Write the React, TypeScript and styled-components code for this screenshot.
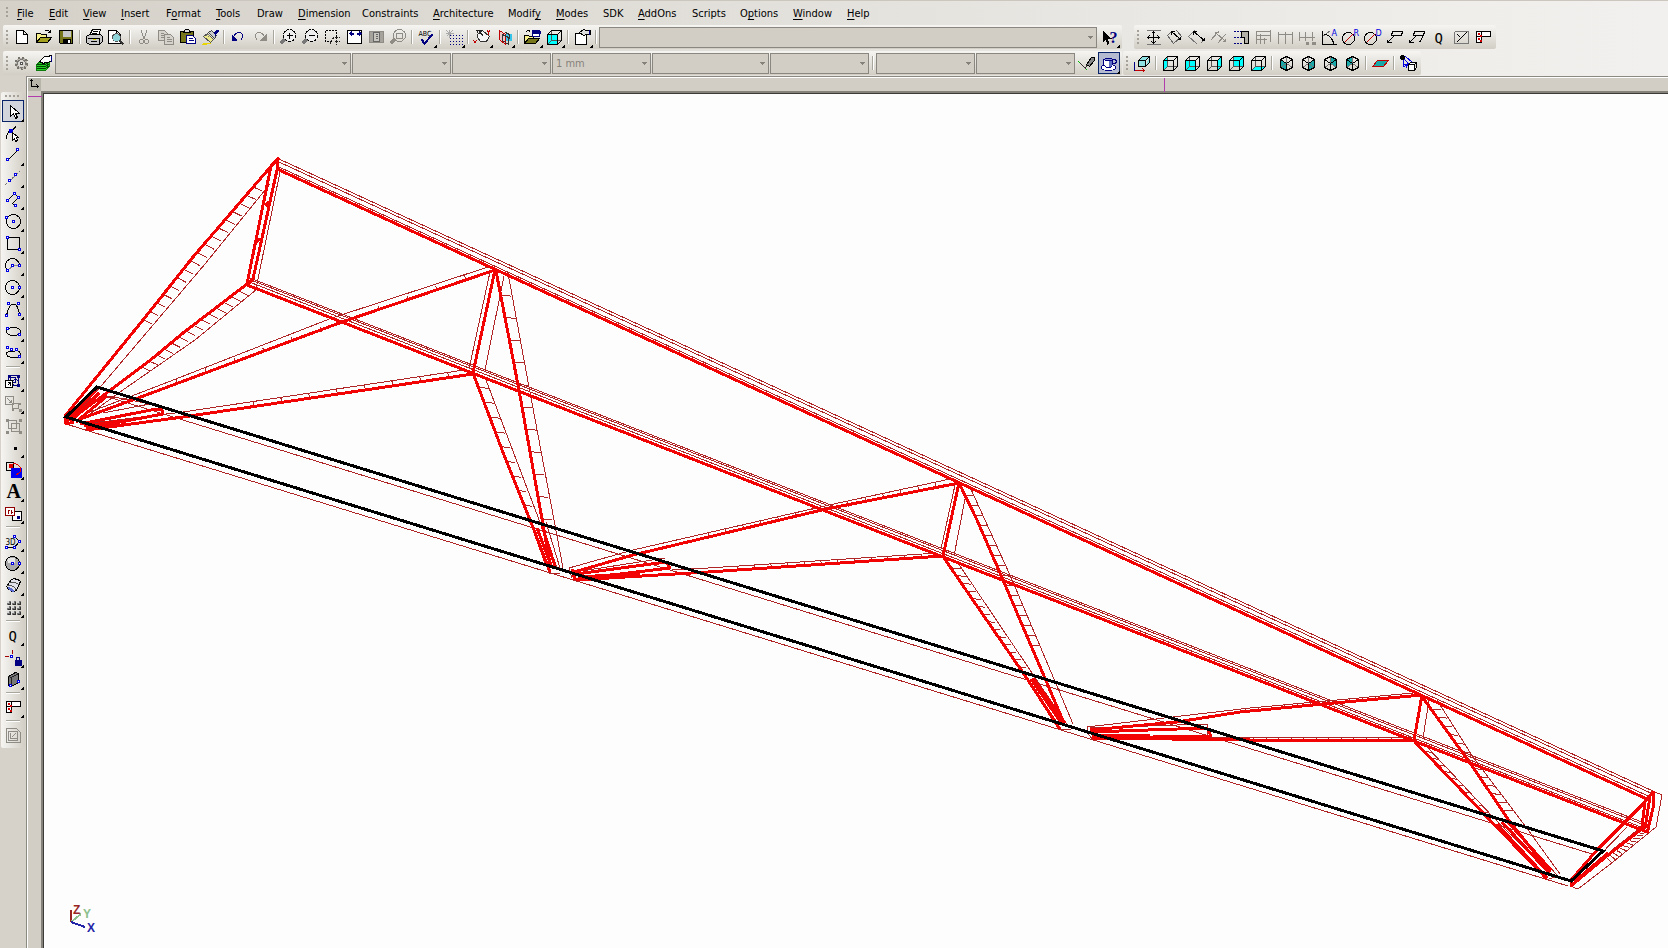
import React from "react";
import styled, { createGlobalStyle, css } from "styled-components";

const GlobalStyle = createGlobalStyle`
  html, body { margin: 0; padding: 0; }
  body {
    background: #d4d0c8;
    font-family: "DejaVu Sans Condensed", "Liberation Sans", sans-serif;
    font-size: 11px;
    color: #000;
  }
  * { box-sizing: border-box; }
`;

/* ---------- layout ---------- */

const AppFrame = styled.div`
  display: flex;
  flex-direction: column;
  height: 100vh;
  overflow: hidden;
`;

const Header = styled.header`
  flex: none;
  background: linear-gradient(90deg, #d5d1c9 0%, #efeeeb 88%, #f1f0ee 100%);
`;

const MenuBar = styled.nav`
  display: flex;
  align-items: center;
  height: 25px;
  padding-left: 6px;
  border-top: 1px solid #cbc7bf;
`;

const MenuItem = styled.button<{ $width: number }>`
  flex: none;
  width: ${(p) => p.$width}px;
  height: 24px;
  padding: 2px 0 0;
  border: 0;
  background: transparent;
  font: inherit;
  line-height: 22px;
  text-align: left;
  white-space: nowrap;
  color: #000;
`;

const Key = styled.u`
  text-underline-offset: 2px;
`;

const ToolRow = styled.div<{ $gap: number }>`
  display: flex;
  gap: ${(p) => p.$gap}px;
  padding: 0 0 2px 3px;
  &:last-child { padding-bottom: 1px; }
`;

const Toolbar = styled.div<{ $vertical?: boolean }>`
  display: flex;
  align-items: center;
  border-radius: 2px;
  ${(p) =>
    p.$vertical
      ? css`
          flex-direction: column;
          width: 24px;
          padding-bottom: 2px;
          background: linear-gradient(90deg, #f6f5f2, #d2cec5);
        `
      : css`
          flex: none;
          height: 24px;
          padding-right: 2px;
          background: linear-gradient(180deg, #f6f5f2, #d2cec5);
        `}
`;

const Grip = styled.span<{ $vertical?: boolean }>`
  flex: none;
  ${(p) =>
    p.$vertical
      ? css`
          width: 16px;
          height: 8px;
          background: repeating-linear-gradient(90deg, #a5a198 0 2px, transparent 2px 4px) 0 3px / 16px 2px no-repeat;
        `
      : css`
          width: 8px;
          height: 14px;
          background: repeating-linear-gradient(180deg, #a5a198 0 2px, transparent 2px 4px) 3px 0 / 2px 14px no-repeat;
        `}
`;

const MenuGrip = styled(Grip)`
  width: 11px;
  height: 12px;
  background-position: 0 0;
`;

const Divider = styled.span<{ $vertical?: boolean }>`
  flex: none;
  border: 0 solid #a9a69e;
  ${(p) =>
    p.$vertical
      ? css`
          width: 14px;
          height: 2px;
          margin: 2px 0;
          border-top-width: 1px;
          border-bottom: 1px solid #fff;
        `
      : css`
          width: 2px;
          height: 14px;
          margin: 0 2px;
          border-left-width: 1px;
          border-right: 1px solid #fff;
        `}
`;

const ToolButton = styled.button<{ $active?: boolean }>`
  flex: none;
  display: block;
  width: 22px;
  height: 22px;
  padding: 0;
  border: 0;
  background: ${(p) => (p.$active ? "#b4bbd0" : "transparent")};
  box-shadow: ${(p) => (p.$active ? "inset 0 0 0 1px #0a246a" : "none")};
  svg { display: block; }
`;

const PickedButton = styled(ToolButton)`
  background: #d3d5dc;
`;

const ComboWrap = styled.span<{ $width: number }>`
  position: relative;
  flex: none;
  width: ${(p) => p.$width}px;
  height: 21px;
  margin-right: 1px;
  svg { position: absolute; right: 4px; top: 9px; pointer-events: none; }
`;

const ComboSelect = styled.select`
  appearance: none;
  display: block;
  width: 100%;
  height: 100%;
  padding: 0 3px;
  border: 1px solid #8a8780;
  border-radius: 0;
  background: #d3cec5;
  font: inherit;
  color: #85827b;
  opacity: 1;
`;

const Workspace = styled.main`
  flex: 1;
  display: flex;
  min-height: 0;
  background: #d3cec5;
`;

const Side = styled.aside`
  flex: none;
  width: 26px;
  padding: 16px 0 0 1px;
  background: #d6d2ca;
`;

const Sheet = styled.section`
  flex: 1;
  display: flex;
  flex-direction: column;
  min-width: 0;
  border-top: 1px solid #8c8982;
  border-left: 1px solid #8c8982;
`;

const TopRuler = styled.div`
  flex: none;
  position: relative;
  display: flex;
  height: 14px;
  border-top: 1px solid #fff;
  border-left: 1px solid #fff;
`;

const Corner = styled.span`
  width: 13px;
  height: 13px;
  background: #b7b4aa;
  svg { display: block; }
`;

const SheetBody = styled.div`
  flex: 1;
  display: flex;
  min-height: 0;
`;

const SideRuler = styled.div`
  flex: none;
  position: relative;
  width: 14px;
  border-left: 1px solid #fff;
`;

const TopMark = styled.i`
  position: absolute;
  left: 1136px;
  top: 0;
  width: 1px;
  height: 14px;
  background: #b03cae;
`;

const SideMark = styled.i`
  position: absolute;
  left: 0;
  top: 5px;
  width: 14px;
  height: 1px;
  background: #b03cae;
`;

const Canvas = styled.div`
  flex: 1;
  min-width: 0;
  border-style: solid;
  border-color: #85827b;
  border-width: 2px 0 0 2px;
  background: #fdfdfd;
  box-shadow: inset 1px 1px 0 #3c3b38;
  padding: 1px 0 0 1px;
  overflow: hidden;
  svg { display: block; width: 100%; height: 100%; }
`;

/* ---------- icons ---------- */

const K = "#000";
const B = "#0000e0";
const N = "#000080";
const G = "#8f8c86";
const R = "#c00000";
const C = "#00ffff";
const W = "#fff";
const T = "#1aa7a7";

const L = (d: string, stroke = K, fill = "none", w = 1) => (
  <path key={d + stroke + fill} d={d} stroke={stroke} fill={fill} strokeWidth={w} />
);
const F = (d: string, fill = K) => <path key={d + fill} d={d} fill={fill} />;
const nodes = (...pts: number[][]) => L(pts.map(([x, y]) => `M${x - 1} ${y - 1}h2v2h-2z`).join(""), B, W);
const Tx = (s: string, x: number, y: number, size: number, fill = K, serif = false) => (
  <text
    x={x}
    y={y}
    fontSize={size}
    fill={fill}
    fontWeight={serif ? "bold" : "normal"}
    fontFamily={serif ? '"Liberation Serif", serif' : '"DejaVu Sans Condensed", sans-serif'}
  >
    {s}
  </text>
);
const ring = (x: number, y: number, r: number, stroke = K, fill = "none") => (
  <circle cx={x} cy={y} r={r} stroke={stroke} fill={fill} />
);
const cube = (face: string) => (
  <>
    {F(face, C)}
    {L("M8 4v10h10M4 18l4-4", "#555")}
    {L("M4 8h10v10h-10zM4 8l4-4h10l-4 4M18 4v10l-4 4")}
  </>
);
const iso = (face: string) => (
  <>
    {F(face, T)}
    {L("M11 4v7M5 15l6-4l6 4", "#777")}
    {L("M11 4l6 3v8l-6 3l-6-3v-8zM5 7l6 4l6-4M11 11v7")}
  </>
);
const lens = (extra: React.ReactNode) => (
  <>
    <circle cx={12} cy={9} r={6} stroke={K} fill="#eee" strokeDasharray="3 1" />
    {L("M3 17l4-4", "#777", "none", 3)}
    {extra}
  </>
);

const icons: Record<string, React.ReactNode> = {
  new: <>{L("M5 4h7l4 4v9h-11zM12 4v4h4", K, W)}</>,
  open: (
    <>
      {L("M3 16v-9h4l1 1h5v3", K, "#f7f08a")}
      {L("M3 16l4-5h11l-4 5z", K, "#a3a020")}
      {L("M11 5q3-3 6 1M17 3v3h-3")}
    </>
  ),
  save: <>{L("M4 4h13v13h-12l-1-1z", K, "#77761a")}{F("M7 4h8v6h-8z", "#c8c8c8")}{F("M7 12h8v5h-8z")}{F("M12 13h2v3h-2z", W)}</>,
  print: (
    <>
      {L("M6 9l3-6h8l-2 6", K, W)}
      {L("M3 10l3-2h11l2 2v5l-3 3h-10l-3-2z", K, "#c8c8c8")}
      {L("M9 5h5M8 7h5M4 12h12M7 15h6M16 12v5")}
      {F("M9 12h3v1h-3z", "#d8d800")}
    </>
  ),
  preview: <>{L("M3 4h8l4 4v9h-12zM11 4v4h4", K, W)}{ring(11, 11, 4, "#555", "#8fd4d8")}{L("M14 14l4 4", "#333", "none", 2)}</>,
  cut: <>{L("M8 4l1 5l3 4M13 4l-1 5l-3 4", G)}{ring(8, 15, 2, G)}{ring(13, 15, 2, G)}</>,
  copy: <>{L("M3 4h6l3 3v7h-9zM5 7h3M5 9h5M5 11h5", G, "#d6d3cc")}{L("M9 8h6l3 3v7h-9zM11 11h3M11 13h5M11 15h5", G, "#d6d3cc")}</>,
  paste: <>{L("M3 5h13v11h-13z", K, "#77761a")}{L("M6 6l2-3h3l2 3z", K, "#ddd")}{L("M9 9h6l3 3v5h-9z", N, W)}{L("M11 12h4M11 14h5", N)}</>,
  brush: (
    <>
      {L("M3 17h7l2-1M2 18h5", "#e8d400")}
      {L("M8 7l6 6l-3 3l-7-6z", "#555", "#ece88a")}
      {L("M8 11l3-3M7 9l3-2", "#777")}
      {L("M9 6l6 6l2-3l-5-5z", "#444", "#ccc")}
      {F("M14 6l3-3h2v2l-3 4z", N)}
    </>
  ),
  undo: <>{L("M6 10q2-4 6-4q4 1 3 5l-2 3", N)}{F("M4 7v7h6z", N)}</>,
  redo: <>{L("M15 10q-2-4-6-4q-4 1-3 5l2 3", G)}{F("M17 7v7h-6z", G)}</>,
  zoomIn: lens(L("M9 9h6M12 6v6")),
  zoomOut: lens(L("M9 9h6")),
  zoomWin: (
    <>
      <path d="M4 4h11v8M4 4v11h6" stroke={K} fill="none" strokeDasharray="2 1" />
      <path d="M9 17q0-6 6-6h3M13 15h5M15 13v5" stroke="#222" strokeDasharray="3 1" />
    </>
  ),
  fit: <>{L("M4 4h14v13h-14z", K, W)}{F("M5 7l3-3v2h2v2h-2v2zM18 7l-3-3v2h-2v2h2v2z", N)}</>,
  page: <>{L("M4 5h14v11h-14z", G, "#a6a39c")}{L("M8 6h6v9h-6zM10 8h2M10 10h2M10 12h2", "#666", "#c8c5be")}</>,
  zoomObj: <>{ring(12, 9, 6, G)}{L("M9 7h6v5h-6z", G)}{L("M3 17l4-4", G, "none", 3)}</>,
  spell: <>{Tx("ABC", 3, 9, 7)}{L("M6 13l3 4l8-9", N, "none", 2)}</>,
  snap: (
    <>
      <path d="M6 9h13M6 12h13M6 15h13M6 18h13" stroke={N} strokeDasharray="1 2" />
      {L("M6 3v8M2 7h8M3 4l6 6M9 4l-6 6", "#aaa")}
    </>
  ),
  rotate: <>{L("M6 8l5-4l7 6l-3 5h-6l-3-4z", "#333", "#f6f6f6")}{L("M5 4l2 3M5 4h6M8 5l4 5", "#222")}{L("M16 4l1 2l1-2M17 6v2M2 14l3 3M5 14l-3 3", R)}</>,
  mirror: <>{F("M12 8l6-1v7h-6z", "#38c4e8")}{L("M6 4l6 4v10l-6-5z", R, "#eec6c6")}{L("M9 8l6 3v7l-6-4zM12 6l4 2v4", "#333")}</>,
  openWin: <>{L("M3 17v-8h4l1 1h4v3", K, "#f7f08a")}{L("M3 17l4-5h11l-4 5z", K, "#77761a")}{L("M11 4h7v6h-7z", N, W)}{F("M11 4h8v3h-8z", N)}{L("M4 6q2-3 5-1")}</>,
  solid: cube("M4 8h10v10h-10z"),
  props: <>{L("M4 7h11v11h-11z", K, W)}{L("M8 6l4-3l3 1h4v4h-4l-3 1z", K, "#ddd")}{L("M18 3v5", N)}</>,
  help: <>{F("M4 4v12l3-3l2 5l2-1l-2-5h4z")}{Tx("?", 11, 16, 16, N, true)}</>,
  gear: (
    <>
      <circle cx={10} cy={11} r={6} stroke="#77736a" fill="#b9b6ae" strokeWidth={2} strokeDasharray="2 2" />
      {ring(10, 11, 4, "#777", "#d9d7d0")}
      {ring(10, 11, 1, "#555", W)}
    </>
  ),
  layers: (
    <>
      {L("M3 12l4-3h9v5l-4 4h-9z", "#0c7a0c", "#21d521")}
      {L("M3 12h9l4-3M3 14h9l4-3M3 16h9l4-3", "#064006")}
      {L("M6 9l5-5h3l4-1v5l-3 2h-3l-2 1z", K, W)}
      {L("M18 3v6", N)}
    </>
  ),
  pen: <>{L("M2 9l9 9", "#00c000")}{L("M4 11l5 5l1-3", "#333")}{L("M10 12l5-7h3v3l-5 6z", K, "#888")}</>,
  cup: (
    <>
      <ellipse cx={10} cy={15} rx={7} ry={3} stroke={N} fill={W} />
      <ellipse cx={15} cy={9} rx={3} ry={2} stroke={N} />
      {L("M5 7v5l3 3h4l2-3v-5z", N, W)}
      {F("M10 8h4l-1 6h-3z", "#5c6cc0")}
      <ellipse cx={10} cy={7} rx={4} ry={1} stroke={N} fill="#8d98d4" />
    </>
  ),
  d1: <>{L("M4 4h14M4 18h14", "#777")}{L("M11 5v12M5 11h12M9 7l2-2l2 2M9 15l2 2l2-2M7 9l-2 2l2 2M15 9l2 2l-2 2")}</>,
  d2: <>{L("M3 9l6 8M12 4l6 7M3 9l4-4M9 17l8-7", "#666")}{L("M7 5l9 8M7 8v-3h3M16 10v3h-3")}</>,
  d3: <>{L("M2 10l6-6M2 10l9 8M18 13l-4 4", "#777")}{L("M7 5l11 9M7 8v-3h3M18 11v3h-3")}</>,
  d4: <>{L("M2 14l8-9M9 17l8-9M7 6l10 9M7 9v-3h3M17 12v3h-3", G)}</>,
  d5: <><path d="M3 5h8M3 11h8M3 17h8" stroke={N} strokeDasharray="2 1" />{L("M11 5h7v12h-4v-6h-3z", K, "#b5b2aa")}</>,
  d6: <>{L("M4 4v13M4 5h14M4 9h14M4 13h10M8 7v10M12 11v6M18 3v12", G)}</>,
  d7: <>{L("M4 5v12M11 5v12M18 5v12M4 8h14", G)}</>,
  d8: <>{L("M3 5v9M9 5v9M16 5v9M3 11h15", G)}{F("M9 15h3v3h-3zM15 15h4v3h-4z", G)}</>,
  d9: <>{L("M4 10L12 4", "#777")}{L("M4 4v14h14M5 8q8 0 10 9M5 8h3M15 17v-3")}{Tx("A", 13, 9, 9, B)}</>,
  d10: <>{ring(8, 12, 6)}{L("M4 16l8-8", R)}{Tx("R", 13, 9, 9, B)}</>,
  d11: <>{ring(8, 12, 6)}{L("M4 16l8-8", R)}{Tx("D", 13, 9, 9, B)}</>,
  d12: <>{L("M8 5h10l-1 4h-10zM10 9l-7 7M3 13v3h4")}</>,
  d13: <>{L("M8 5h10l-1 4h-10zM10 9l-7 7M3 13v3h4M17 9l-4 7")}</>,
  label: (
    <text x={6} y={16} fontSize={14} fontFamily='"DejaVu Sans Mono", monospace' fill={K}>
      Q
    </text>
  ),
  d15: <>{L("M4 5h14M4 5v12h14v-12", "#777")}{L("M6 16l10-10M7 8l3 3")}</>,
  plan: <>{L("M4 5h14v5h-14zM9 5v11h-5v-11M4 10h5", K, W)}{F("M5 6h2v2h-2zM7 8h2v2h-2zM5 11h2v2h-2zM7 13h2v2h-2z", "#d00000")}</>,
  ucs: <>{L("M7 8h7v6h-7zM7 8l4-4h7l-4 4M18 4v6l-4 4", K, "#8fe0e0")}{L("M3 9v9", N)}{L("M3 18h10M11 16l2 2l-2 2", R)}</>,
  c1: cube("M4 8l4-4v10l-4 4z"),
  c3: cube("M14 8l4-4v10l-4 4z"),
  c4: cube("M8 4h10v10h-10z"),
  c5: cube("M4 18l4-4h10l-4 4z"),
  i1: iso("M5 7l6 4v7l-6-3z"),
  i2: iso("M11 11l6-4v8l-6 3z"),
  i3: iso("M11 4l6 3v8l-6-4z"),
  i4: iso("M11 4l-6 3v8l6-4z"),
  plane: <>{L("M3 14l5-6h11l-5 6z", R, T)}</>,
  cam: (
    <>
      {L("M6 6l8 8M6 6v8M6 14l7-2M8 4l7 6M5 12h5M9 16l1-6", B)}
      {ring(5, 5, 2, K, K)}
      {L("M11 12h6v6h-6zM11 12l2-2h6l-2 2M19 10v5l-2 3", K, W)}
    </>
  ),

  arrow: <>{L("M8 5v11l3-3l2 5l2-1l-2-4h4z", K, W)}</>,
  nodeEdit: <>{L("M4 16q0-6 4-8q4-1 5-4")}{F("M6 6h4v4h-4z", B)}{L("M10 10v8l2-2l1 3l2-1l-1-3h2z", K, W)}</>,
  line: <>{L("M6 15l10-10")}{nodes([5, 15], [15, 5])}</>,
  ray: <><path d="M3 18l15-14" stroke="#777" strokeDasharray="2 1" />{nodes([7, 14], [13, 8])}</>,
  poly: <>{L("M5 12l7-7l4 4l-6 6l3 2")}{nodes([5, 12], [12, 5], [16, 9], [13, 17])}</>,
  circle2: <>{ring(11, 11, 7)}{nodes([11, 11], [4, 7])}</>,
  rect: <>{L("M5 5h12v12h-12z")}{nodes([5, 5], [17, 17])}</>,
  arc: <>{L("M5 16a7 7 0 1 1 12-5")}{L("M5 16l6-5h6", "#888")}{nodes([5, 16], [10, 11], [17, 11])}</>,
  circle: <>{ring(10, 11, 7)}{nodes([10, 11], [17, 11])}</>,
  bezier: <>{L("M4 17C7 2 15 2 17 16")}{nodes([6, 5], [16, 5], [4, 17], [17, 16])}</>,
  ellipse: <><ellipse cx={11} cy={11} rx={7} ry={4} stroke={K} fill="none" />{nodes([5, 8], [17, 14])}</>,
  curve: <>{L("M4 10q-1 5 7 5q7 0 7-3q0-5-8-3q-6 0-6 2")}{nodes([5, 5], [9, 7], [14, 7], [17, 14])}</>,
  sym: <>{L("M6 5h10v10h-10zM8 7h5v5h-5z", N)}{F("M5 4h3v3h-3zM14 4h3v3h-3zM14 13h3v3h-3z", N)}{ring(13, 12, 3, N)}{L("M3 10h7v7h-7zM5 15l3-3M5 12h3v3", K, W)}</>,
  explode: <>{L("M3 4h8v8h-8zM5 6l4 4M9 7v3h-3M10 11h6v5h-6z", G)}{F("M9 10h2v2h-2zM16 10h2v2h-2zM9 16h2v2h-2zM16 16h3v3h-3z", G)}</>,
  group: <>{L("M6 6h8v8h-8zM9 9h8v8h-8z", G)}{F("M3 4h3v3h-3zM16 4h3v3h-3zM3 16h3v3h-3zM16 16h3v3h-3z", G)}</>,
  point: <>{F("M11 10h3v3h-3z")}</>,
  fill: <>{L("M4 4h7v8h-7z")}{F("M6 5h4v4h-4z", "#e00000")}{F("M8 9h11v10h-11z", "#0000f0")}{L("M10 5q7 0 8 5q1 4-4 6", "#e00000")}</>,
  text: <>{Tx("A", 4, 17, 20, K, true)}</>,
  block: <>{L("M10 9h9v9h-9z", K, W)}{L("M3 5h9v8h-9z", "#900000", W)}{L("M6 7v4M9 7v4M5 8h2M8 10h2", "#900000")}{F("M14 13h3v3h-3z", N)}</>,
  three: <>{L("M13 7l4 4l-5 6h-7")}{Tx("3D", 3, 14, 8)}{nodes([12, 6], [17, 11], [12, 17], [4, 17])}</>,
  sphere: <>{ring(10, 11, 7, K, "#a8a8a8")}<ellipse cx={9} cy={8} rx={4} ry={3} fill="#e6e6e6" />{nodes([10, 11], [17, 11])}</>,
  cyl: <>{L("M4 12l5-7q5-2 9 2l-4 9q-5 3-10-4z", K, "#e2e2ea")}{L("M4 12q1-2 5-1q4 2 5 5M7 8q4-1 10 2", "#555")}{F("M5 13q5-1 7 4q-5 1-7-4z", "#5c6cd0")}</>,
  balls: (
    <>
      {[6, 11, 16].flatMap((y) =>
        [6, 11, 16].map((x) => (
          <g key={`${x}-${y}`}>
            {F(`M${x - 2} ${y - 2}h4v4h-4z`, "#777")}
            {F(`M${x - 2} ${y - 2}h2v2h-2z`, "#d8d8d8")}
            {L(`M${x - 1} ${y + 2}h3v-3`, "#333")}
          </g>
        ))
      )}
    </>
  ),
  lock: <>{L("M2 10h4M10 3v4", "#a00000")}{nodes([9, 10])}{F("M12 13h7v6h-7z", N)}{L("M14 13v-2h3v2", N)}</>,
  slab: <>{L("M6 8l7-4l3 1v9l-7 4l-3-1z", K, "#777")}{L("M6 8l3 1v9M9 9l7-4", "#222")}{nodes([8, 17], [16, 13])}</>,
  sheet: <>{L("M4 4h10l4 4v10h-14zM6 7h9v9h-9zM8 8v6h6M9 13l4-4", G)}</>,
};

const Icon = ({ name, drop }: { name: string; drop?: boolean }) => (
  <svg width="22" height="22" viewBox="0 0 22 22" shapeRendering="crispEdges" aria-hidden="true">
    <g transform="translate(.5 .5)" fill="none">
      {icons[name]}
    </g>
    {drop && <path d="M22 18v4h-4z" fill="#000" />}
  </svg>
);

/* ---------- controls ---------- */

const Tools = ({ list, vertical }: { list: string; vertical?: boolean }) => (
  <>
    {list.split(" ").map((id, i) => {
      if (id === "|") return <Divider key={i} $vertical={vertical} />;
      const drop = id.endsWith("+");
      const name = drop ? id.slice(0, -1) : id;
      return (
        <ToolButton key={i} type="button" aria-label={name} $active={name === "cup"}>
          <Icon name={name} drop={drop} />
        </ToolButton>
      );
    })}
  </>
);

const Combo = ({ label, width, value = "" }: { label: string; width: number; value?: string }) => (
  <ComboWrap $width={width}>
    <ComboSelect aria-label={label} disabled defaultValue={value}>
      <option value={value}>{value}</option>
    </ComboSelect>
    <svg width="5" height="3" viewBox="0 0 5 3" shapeRendering="crispEdges" aria-hidden="true">
      <path d="M0 0h5L3 3H2z" fill="#85827b" />
    </svg>
  </ComboWrap>
);

const menus: [string, string, string, number][] = [
  ["", "F", "ile", 32],
  ["", "E", "dit", 34],
  ["", "V", "iew", 38],
  ["", "I", "nsert", 45],
  ["F", "o", "rmat", 50],
  ["", "T", "ools", 41],
  ["Draw", "", "", 41],
  ["", "D", "imension", 64],
  ["Constraints", "", "", 71],
  ["", "A", "rchitecture", 75],
  ["Modif", "y", "", 48],
  ["", "M", "odes", 47],
  ["SDK", "", "", 35],
  ["", "A", "ddOns", 54],
  ["Scripts", "", "", 48],
  ["O", "p", "tions", 53],
  ["", "W", "indow", 54],
  ["", "H", "elp", 40],
];

/* ---------- model drawing ---------- */

type Pt = [number, number];

const poly = (pts: Pt[]) => pts.map(([x, y], i) => `${i ? "L" : "M"}${x} ${y}`).join("");

const at = (pts: Pt[], t: number): Pt => {
  const spans = pts.slice(1).map((p, i) => Math.hypot(p[0] - pts[i][0], p[1] - pts[i][1]));
  let d = t * spans.reduce((a, b) => a + b, 0);
  for (let i = 0; i < spans.length; i++) {
    if (d <= spans[i] || i === spans.length - 1) {
      const k = d / spans[i];
      return [pts[i][0] + (pts[i + 1][0] - pts[i][0]) * k, pts[i][1] + (pts[i + 1][1] - pts[i][1]) * k];
    }
    d -= spans[i];
  }
  return pts[0];
};

const rungs = (a: Pt[], b: Pt[], n: number) =>
  Array.from({ length: n }, (_, i) => poly([at(a, (i + 0.5) / n), at(b, (i + 0.5) / n)])).join("");

const thick: Pt[][] = [
  [[277, 169], [1649, 800]],
  [[247, 285], [1647, 832]],
  [[279, 158], [271, 166], [247, 284]],
  [[278, 158], [277, 170], [253, 279], [247, 285]],
  [[269, 202], [265, 206]],
  [[260, 239], [255, 243]],
  [[279, 158], [273, 164], [193, 257], [147, 315], [65, 416]],
  [[247, 284], [183, 333], [153, 358], [112, 389], [70, 420]],
  [[495, 270], [342, 322], [138, 398], [80, 419]],
  [[473, 374], [183, 417], [87, 430]],
  [[495, 270], [473, 373]],
  [[496, 271], [519, 390], [550, 564]],
  [[473, 373], [504, 455], [534, 530], [547, 566]],
  [[959, 483], [826, 509], [633, 555], [574, 572]],
  [[943, 556], [708, 572], [576, 580]],
  [[959, 483], [943, 556]],
  [[960, 485], [977, 520], [1000, 573], [1064, 723]],
  [[944, 558], [988, 622], [1028, 680], [1059, 728]],
  [[1422, 695], [1323, 704], [1240, 712], [1177, 722], [1090, 730]],
  [[1414, 740], [1250, 740], [1092, 738]],
  [[1422, 695], [1414, 740]],
  [[1423, 698], [1470, 763], [1510, 822], [1550, 872]],
  [[1415, 742], [1487, 817], [1547, 879]],
  // fan foot, left support
  [[65, 417], [66, 424], [74, 422]],
  [[95, 391], [66, 422]],
  [[99, 393], [70, 422]],
  [[107, 396], [76, 422]],
  [[80, 424], [156, 409], [162, 410], [163, 414], [88, 428]],
  [[84, 426], [120, 421]],
  [[86, 429], [130, 424]],
  // first valley
  [[534, 530], [550, 572]],
  [[537, 528], [552, 568]],
  [[542, 526], [555, 566]],
  [[576, 574], [666, 562], [670, 568], [578, 579]],
  [[572, 569], [575, 580]],
  [[580, 577], [640, 573]],
  // second valley
  [[1028, 680], [1060, 729]],
  [[1033, 678], [1065, 723]],
  [[1031, 679], [1062, 724]],
  [[1090, 732], [1207, 728], [1211, 736], [1096, 738]],
  [[1092, 735], [1150, 735]],
  // third valley
  [[1497, 824], [1547, 878]],
  [[1502, 822], [1549, 873]],
  [[1508, 822], [1551, 870]],
  // right end frame
  [[1653, 791], [1654, 804], [1647, 833]],
  [[1645, 802], [1642, 826], [1640, 830]],
  [[1650, 797], [1645, 828]],
  [[1653, 792], [1644, 803], [1597, 850], [1571, 880]],
  [[1647, 825], [1608, 855], [1571, 886], [1571, 881]],
  [[1608, 853], [1574, 882]],
];

const A1: Pt[] = [[257, 183], [193, 257], [140, 324]];
const A2: Pt[] = [[266, 187], [203, 262], [148, 328]];
const B1: Pt[] = [[243, 288], [183, 333], [138, 370]];
const B2: Pt[] = [[252, 293], [192, 338], [147, 374]];

const thin: Pt[][] = [
  [[279, 159], [1655, 792], [1662, 795], [1656, 827], [1613, 862], [1578, 889], [1570, 886]],
  [[279, 162], [1655, 795]],
  [[279, 167], [1648, 796]],
  [[250, 278], [1647, 824]],
  [[251, 280], [1647, 826]],
  [[252, 283], [1646, 829]],
  [[280, 172], [258, 279], [256, 289]],
  [[66, 424], [1568, 886]],
  [[105, 396], [1592, 854]],
  [[270, 184], [205, 264], [102, 385], [76, 414]],
  [[257, 289], [195, 340], [120, 392], [90, 414]],
  [[488, 267], [332, 318], [163, 384], [90, 412]],
  [[464, 370], [183, 412], [84, 424]],
  [[155, 403], [103, 413]],
  [[151, 404], [108, 396]],
  [[490, 272], [469, 369]],
  [[504, 276], [485, 370]],
  [[508, 273], [529, 387], [563, 568]],
  [[486, 380], [538, 517], [558, 570]],
  [[549, 573], [560, 573]],
  [[546, 522], [560, 568]],
  [[950, 479], [829, 505], [633, 550], [569, 568], [572, 578]],
  [[938, 553], [708, 568], [672, 570]],
  [[665, 558], [575, 572]],
  [[955, 485], [941, 549]],
  [[966, 494], [954, 556]],
  [[970, 487], [1010, 575], [1073, 724]],
  [[958, 563], [1032, 673], [1068, 726]],
  [[1060, 729], [1071, 730]],
  [[1413, 693], [1250, 708], [1087, 727], [1087, 732], [1092, 739]],
  [[1413, 737], [1210, 737]],
  [[1090, 728], [1207, 724], [1208, 736]],
  [[1429, 700], [1423, 738]],
  [[1437, 700], [1473, 757], [1523, 823], [1560, 874]],
  [[1428, 748], [1493, 817], [1548, 872]],
  [[1515, 830], [1558, 876], [1546, 880]],
  [[1627, 827], [1600, 855]],
  [[1640, 828], [1612, 850]],
];

const hatch = [
  rungs(A1, A2, 17),
  rungs(B1, B2, 14),
  rungs([[480, 275], [163, 389]], [[479, 270], [162, 384]], 11),
  rungs([[463, 375], [240, 408]], [[461, 370], [239, 403]], 8),
  rungs([[499, 284], [519, 390], [544, 530]], [[509, 285], [530, 391], [554, 531]], 11),
  rungs([[476, 380], [504, 455], [528, 512]], [[487, 381], [512, 455], [535, 514]], 9),
  rungs([[945, 486], [700, 539]], [[944, 480], [699, 534]], 14),
  rungs([[930, 557], [730, 570]], [[929, 553], [729, 567]], 12),
  rungs([[963, 491], [1000, 573], [1034, 650]], [[972, 491], [1010, 575], [1042, 650]], 16),
  rungs([[948, 564], [988, 622], [1022, 671]], [[959, 565], [994, 621], [1029, 671]], 14),
  rungs([[1408, 696], [1240, 712]], [[1407, 693], [1239, 709]], 13),
  rungs([[1410, 740], [1235, 740]], [[1410, 737], [1235, 737]], 14),
  rungs([[1428, 705], [1470, 763], [1506, 815]], [[1438, 705], [1475, 761], [1517, 815]], 13),
  rungs([[1420, 747], [1487, 817]], [[1430, 750], [1492, 815]], 10),
  rungs([[1645, 830], [1605, 859]], [[1652, 828], [1610, 864]], 12),
].join("");

const Model = () => (
  <svg viewBox="44 94 1624 854" preserveAspectRatio="xMinYMin meet" role="img" aria-label="Truss wireframe">
    <g fill="none" shapeRendering="crispEdges">
      <path d={thin.map(poly).join("")} stroke="#b02626" />
      <path d={hatch} stroke="#b02626" />
      <path d={thick.map(poly).join("")} stroke="#f20404" strokeWidth="3" strokeLinejoin="round" />
      <path d="M97 387L1603 851L1571 881L66 417Z" stroke="#000" strokeWidth="3" />
      <path d="M71 922v-12" stroke="#982424" strokeWidth="2" />
      <path d="M71 922l10-8" stroke="#8cc08c" strokeWidth="2" />
      <path d="M71 922l14 5" stroke="#2424a8" strokeWidth="2" />
    </g>
    <g fontFamily='"Liberation Sans", sans-serif' fontSize="12" fontWeight="bold">
      <text x="73" y="914" fill="#982424">Z</text>
      <text x="83" y="918" fill="#8cc08c">Y</text>
      <text x="87" y="932" fill="#2424a8">X</text>
    </g>
  </svg>
);

export default function App() {
  return (
    <AppFrame>
      <GlobalStyle />
      <Header>
        <MenuBar aria-label="Main menu">
          <MenuGrip />
          {menus.map(([pre, key, post, width]) => (
            <MenuItem key={pre + key + post} type="button" $width={width}>
              {pre}
              {key && <Key>{key}</Key>}
              {post}
            </MenuItem>
          ))}
        </MenuBar>
        <ToolRow $gap={12}>
          <Toolbar role="toolbar" aria-label="Standard">
            <Grip />
            <Tools list="new open save | print preview | cut copy paste brush | undo redo | zoomIn zoomOut zoomWin fit page zoomObj | spell+ | snap+ | rotate+ mirror+ | openWin+ solid+ | props+ |" />
            <Combo label="Named view" width={498} />
            <Tools list="help+" />
          </Toolbar>
          <Toolbar role="toolbar" aria-label="Dimensions">
            <Grip />
            <Tools list="d1 d2 d3 d4 d5 d6 d7 d8 d9 d10 d11 d12 d13 label d15 plan" />
          </Toolbar>
        </ToolRow>
        <ToolRow $gap={1}>
          <Toolbar role="toolbar" aria-label="Properties">
            <Grip />
            <Tools list="gear layers" />
            <Combo label="Layer" width={296} />
            <Combo label="Color" width={99} />
            <Combo label="Line style" width={99} />
            <Combo label="Line width" width={99} value="1 mm" />
            <Combo label="Pattern" width={117} />
            <Combo label="Brush" width={99} />
            <Divider />
            <Combo label="Material" width={99} />
            <Combo label="Environment" width={99} />
            <Tools list="pen cup+" />
          </Toolbar>
          <Toolbar role="toolbar" aria-label="Views">
            <Grip />
            <Tools list="ucs | c1 solid c3 c4 c5 | i1 i2 i3 i4 | plane | cam" />
          </Toolbar>
        </ToolRow>
      </Header>
      <Workspace>
        <Side>
          <Toolbar $vertical role="toolbar" aria-label="Drawing tools">
            <Grip $vertical />
            <PickedButton type="button" aria-label="Select" $active>
              <Icon name="arrow" drop />
            </PickedButton>
            <Tools
              vertical
              list="nodeEdit line+ ray+ poly+ circle2+ rect+ arc+ circle+ bezier+ ellipse+ curve+ | sym+ explode+ group point+ fill+ text+ block+ | three+ sphere+ cyl+ balls+ | label+ lock+ slab+ | plan+ | sheet"
            />
          </Toolbar>
        </Side>
        <Sheet>
          <TopRuler>
            <Corner>
              <svg width="13" height="13" viewBox="0 0 13 13" shapeRendering="crispEdges" aria-hidden="true">
                <g transform="translate(.5 .5)" stroke="#000" fill="none">
                  <path d="M3 1v7h7M1 3l2-2l2 2M8 6l2 2l-2 2" />
                </g>
              </svg>
            </Corner>
            <TopMark />
          </TopRuler>
          <SheetBody>
            <SideRuler>
              <SideMark />
            </SideRuler>
            <Canvas>
              <Model />
            </Canvas>
          </SheetBody>
        </Sheet>
      </Workspace>
    </AppFrame>
  );
}
